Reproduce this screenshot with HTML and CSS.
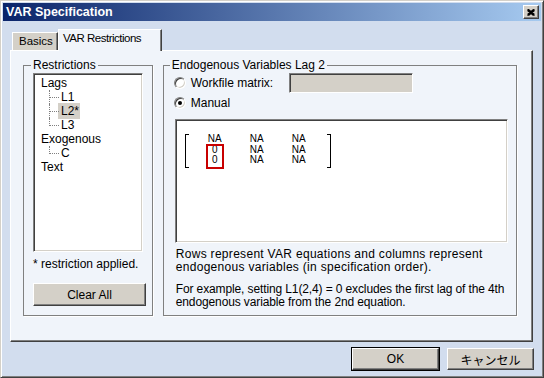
FILE: index.html
```html
<!DOCTYPE html>
<html lang="en">
<head>
    <meta charset="UTF-8">
    <title>VAR Specification</title>
    <link rel="stylesheet" href="styles.css">
</head>
<body>
    <div class="window">
        <div class="titlebar">
            <span class="title">VAR Specification</span>
            <button class="close-btn">
                <svg width="8" height="7" viewBox="0 0 8 7">
                    <path d="M0.5 0.5 L7.5 6.5 M1.5 0.5 L7.5 5.5 M0.5 1.5 L6.5 6.5 M7.5 0.5 L0.5 6.5 M6.5 0.5 L0.5 5.5 M7.5 1.5 L1.5 6.5" stroke="#000" stroke-width="1.1" fill="none"/>
                </svg>
            </button>
        </div>

        <div class="client">
            <div class="tabs">
                <div class="tab">Basics</div>
                <div class="tab active">VAR Restrictions</div>
            </div>

            <div class="tabpage">
                <fieldset class="group restrictions">
                    <legend>Restrictions</legend>
                    <div class="listbox tree">
                        <ul>
                            <li>Lags
                                <ul>
                                    <li>L1</li>
                                    <li><span class="selected">L2*</span></li>
                                    <li>L3</li>
                                </ul>
                            </li>
                            <li>Exogenous
                                <ul>
                                    <li>C</li>
                                </ul>
                            </li>
                            <li>Text</li>
                        </ul>
                    </div>
                    <p class="note">* restriction applied.</p>
                    <button class="btn clear-btn">Clear All</button>
                </fieldset>

                <fieldset class="group endo">
                    <legend>Endogenous Variables Lag 2</legend>
                    <div class="radio-row">
                        <span class="radio"></span>
                        <span class="radio-label wide">Workfile matrix:</span>
                        <div class="field"></div>
                    </div>
                    <div class="radio-row">
                        <span class="radio checked"></span>
                        <span class="radio-label">Manual</span>
                    </div>

                    <div class="matrix-box">
                        <div class="matrix">
                            <span class="bracket left"></span>
                            <div class="col">
                                <div>NA</div>
                                <div class="marked">
                                    <div>0</div>
                                    <div>0</div>
                                </div>
                            </div>
                            <div class="col">
                                <div>NA</div>
                                <div>NA</div>
                                <div>NA</div>
                            </div>
                            <div class="col">
                                <div>NA</div>
                                <div>NA</div>
                                <div>NA</div>
                            </div>
                            <span class="bracket right"></span>
                        </div>
                    </div>

                    <p class="desc">Rows represent VAR equations and columns represent<br>endogenous variables (in specification order).</p>
                    <p class="desc example">For example, setting L1(2,4) = 0 excludes the first lag of the 4th<br>endogenous variable from the 2nd equation.</p>
                </fieldset>
            </div>

            <div class="buttons">
                <button class="btn default">OK</button>
                <button class="btn">キャンセル</button>
            </div>
        </div>
    </div>
</body>
</html>
```

FILE: styles.css
```css
* {
    box-sizing: border-box;
    margin: 0;
    padding: 0;
}

body {
    font-family: 'Liberation Sans', 'Noto Sans CJK JP', sans-serif;
    font-size: 12px;
    color: #000;
    background-color: #d2ddee;
}

.window {
    width: 544px;
    height: 378px;
    padding: 2px;
    background-color: #d2ddee;
    border: 1px solid;
    border-color: #d4d0c8 #404040 #404040 #d4d0c8;
    box-shadow: inset 1px 1px 0 #fff, inset -1px -1px 0 #808080;
}

/* title bar */
.titlebar {
    height: 18px;
    display: flex;
    align-items: center;
    justify-content: space-between;
    padding: 0 2px 0 3px;
    background: linear-gradient(to right, #0a246a, #a6caf0);
}

.title {
    color: #fff;
    font-weight: bold;
    font-size: 12.5px;
}

.close-btn {
    width: 16px;
    height: 14px;
    display: flex;
    align-items: center;
    justify-content: center;
    background-color: #d4d0c8;
    border: 1px solid;
    border-color: #fff #404040 #404040 #fff;
    box-shadow: inset -1px -1px 0 #808080;
}

/* client area */
.client {
    padding: 8px 8px 0 7px;
}

.tabs {
    display: flex;
    align-items: flex-end;
    height: 21px;
    margin-left: 2px;
}

.tab {
    height: 18px;
    width: 46px;
    padding: 2px 0 0 6px;
    font-size: 11.5px;
    background-color: #d4d0c8;
    border: 1px solid;
    border-bottom: none;
    border-color: #fff #404040 #fff #fff;
    box-shadow: inset -1px 0 0 #808080;
}

.tab.active {
    position: relative;
    z-index: 1;
    height: 22px;
    width: 104px;
    margin-bottom: -1px;
    padding: 2px 0 0 4px;
    letter-spacing: -0.5px;
    background-color: #f0f4fa;
}

.tabpage {
    height: 292px;
    display: flex;
    gap: 10px;
    padding: 7px 15px 25px 12px;
    background-color: #f0f4fa;
    border: 1px solid;
    border-color: #fff #404040 #404040 #fff;
    box-shadow: inset -1px -1px 0 #808080;
}

/* group boxes */
.group {
    min-width: 0;
    border: 1px solid #808080;
    box-shadow: 1px 1px 0 #fff;
    padding: 1px 0 0 0;
}

.group legend {
    padding: 0 2px;
    line-height: 14px;
}

.restrictions {
    width: 130px;
    padding-left: 9px;
}

.restrictions legend {
    margin-left: -2px;
}

.endo {
    width: 355px;
    padding-left: 10px;
}

.endo legend {
    margin-left: -4px;
}

.listbox {
    width: 110px;
    height: 179px;
    background-color: #fff;
    border: 1px solid;
    border-color: #808080 #fff #fff #808080;
    box-shadow: inset 1px 1px 0 #404040, inset -1px -1px 0 #d4d0c8;
    padding: 2px 0 0 7px;
}

.tree ul {
    list-style: none;
    line-height: 14px;
}

.tree ul ul {
    padding-left: 20px;
}

.tree ul ul li {
    position: relative;
}

.tree ul ul li::before {
    content: '';
    position: absolute;
    left: -12px;
    top: 0;
    width: 9px;
    height: 7px;
    border-left: 1px dotted #808080;
    border-bottom: 1px dotted #808080;
}

.tree ul ul li:not(:last-child)::after {
    content: '';
    position: absolute;
    left: -12px;
    top: 7px;
    bottom: 0;
    border-left: 1px dotted #808080;
}

.tree .selected {
    background-color: #d4d0c8;
    margin-left: -3px;
    padding: 1px 1px 1px 3px;
}

.note {
    margin-top: 5px;
    line-height: 14px;
}

.btn {
    font-family: 'Liberation Sans', 'Noto Sans CJK JP', sans-serif;
    font-size: 12px;
    color: #000;
    background-color: #d4d0c8;
    border: 1px solid;
    border-color: #fff #404040 #404040 #fff;
    box-shadow: inset -1px -1px 0 #808080;
}

.clear-btn {
    width: 113px;
    height: 23px;
    margin-top: 12px;
}

/* radio rows */
.radio-row {
    height: 20px;
    display: flex;
    align-items: center;
}

.radio {
    position: relative;
    width: 12px;
    height: 12px;
    border-radius: 50%;
    background-color: #fff;
    border: 1px solid;
    border-color: #808080 #fff #fff #808080;
    box-shadow: inset 1px 1px 0 #404040, inset -1px -1px 0 #d4d0c8;
}

.radio.checked::after {
    content: '';
    position: absolute;
    left: 3px;
    top: 3px;
    width: 4px;
    height: 4px;
    border-radius: 50%;
    background-color: #000;
}

.radio-label {
    margin-left: 5px;
}

.radio-label.wide {
    width: 98px;
}

.field {
    width: 124px;
    height: 20px;
    background-color: #d4d0c8;
    border: 1px solid;
    border-color: #808080 #fff #fff #808080;
    box-shadow: inset 1px 1px 0 #404040;
}

/* matrix */
.matrix-box {
    width: 333px;
    height: 124px;
    margin: 6px 0 0 1px;
    padding: 14px 0 0 9px;
    background-color: #fff;
    border: 1px solid;
    border-color: #808080 #fff #fff #808080;
    box-shadow: inset 1px 1px 0 #404040, inset -1px -1px 0 #d4d0c8;
}

.matrix {
    display: flex;
    align-items: flex-start;
    font-size: 10px;
    line-height: 10.5px;
}

.bracket {
    width: 4px;
    height: 34px;
    border: 1px solid #000;
}

.bracket.left {
    border-right: none;
    margin-right: 5px;
}

.bracket.right {
    border-left: none;
    margin-left: 7px;
}

.col {
    width: 42px;
    display: flex;
    flex-direction: column;
    align-items: center;
    text-align: center;
}

.marked {
    width: 16px;
    padding-bottom: 2px;
    outline: 2px solid #c80000;
    outline-offset: -1px;
}

.desc {
    margin: 5px 0 0 2px;
    line-height: 13px;
    letter-spacing: 0.3px;
    white-space: nowrap;
}

.desc.example {
    margin-top: 9px;
    letter-spacing: -0.12px;
}

/* bottom buttons */
.buttons {
    display: flex;
    justify-content: flex-end;
    gap: 8px;
    margin: 6px -1px 0 0;
}

.buttons .btn {
    width: 87px;
    height: 22px;
}

.btn.default {
    outline: 1px solid #000;
    outline-offset: 0;
}
```
